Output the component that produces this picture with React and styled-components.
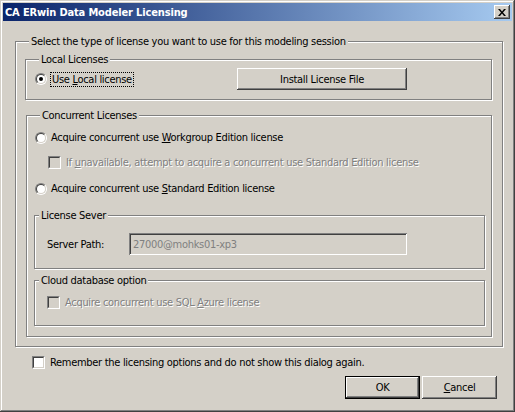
import styled, { createGlobalStyle } from "styled-components";

const FACE = "#d4d0c8";

const GlobalStyle = createGlobalStyle`
  html, body {
    margin: 0;
    padding: 0;
    background: ${FACE};
  }
  * {
    box-sizing: border-box;
  }
`;

const Window = styled.div`
  width: 515px;
  height: 412px;
  padding: 3px;
  background: ${FACE};
  box-shadow: inset -1px -1px #404040, inset 1px 1px ${FACE},
    inset -2px -2px #808080, inset 2px 2px #ffffff;
  font-family: "DejaVu Sans Condensed", "Liberation Sans", sans-serif;
  font-size: 11px;
  line-height: 13px;
  letter-spacing: -0.3px;
  color: #000;
`;

const TitleBar = styled.div`
  height: 18px;
  display: flex;
  align-items: center;
  padding-left: 2px;
  background: linear-gradient(to right, #0a246a, #a6caf0);
  color: #fff;
  font-weight: bold;
  letter-spacing: -0.15px;
`;

const CloseButton = styled.div`
  margin-left: auto;
  margin-right: 2px;
  width: 16px;
  height: 14px;
  display: flex;
  align-items: center;
  justify-content: center;
  background: ${FACE};
  box-shadow: inset -1px -1px #404040, inset 1px 1px #ffffff,
    inset -2px -2px #808080, inset 2px 2px ${FACE};
`;

const Client = styled.div`
  display: flex;
  flex-direction: column;
`;

const GroupBox = styled.div`
  width: ${(p) => p.$width}px;
  margin: ${(p) => p.$margin};
  padding: ${(p) => p.$padding};
  border: 1px solid #808080;
  box-shadow: inset 1px 1px #ffffff, 1px 1px #ffffff;
`;

const Caption = styled.div`
  width: fit-content;
  height: 13px;
  margin: -7px 0 0 ${(p) => p.$indent}px;
  padding: 0 2px;
  background: ${FACE};
  white-space: nowrap;
`;

const LocalRow = styled.div`
  display: grid;
  grid-template-columns: 202px 170px;
  align-items: center;
  height: 22px;
  margin-top: 2px;
`;

const OptionRow = styled.div`
  display: flex;
  align-items: center;
  height: 13px;
  gap: ${(p) => p.$gap}px;
  margin: ${(p) => p.$margin};
  white-space: nowrap;
  color: ${(p) => (p.$disabled ? "#808080" : "#000")};
  text-shadow: ${(p) => (p.$disabled ? "1px 1px 0 #ffffff" : "none")};
`;

const RadioOuter = styled.span`
  width: 12px;
  height: 12px;
  flex: none;
  border-radius: 50%;
  border: 1px solid;
  border-color: #808080 #ffffff #ffffff #808080;
  display: flex;
`;

const RadioInner = styled.span`
  flex: 1;
  border-radius: 50%;
  border: 1px solid;
  border-color: #404040 ${FACE} ${FACE} #404040;
  background: #ffffff;
  display: flex;
  align-items: center;
  justify-content: center;

  &::after {
    content: "";
    width: 4px;
    height: 4px;
    border-radius: 50%;
    background: ${(p) => (p.$checked ? "#000" : "transparent")};
  }
`;

const CheckOuter = styled.span`
  width: 13px;
  height: 13px;
  flex: none;
  border: 1px solid;
  border-color: #808080 #ffffff #ffffff #808080;
  display: flex;
`;

const CheckInner = styled.span`
  flex: 1;
  border: 1px solid;
  border-color: #404040 ${FACE} ${FACE} #404040;
  background: ${(p) => (p.$disabled ? FACE : "#ffffff")};
`;

const FocusLabel = styled.span`
  border: 1px dotted #000;
  padding: 0 1px;
  line-height: 13px;
`;

const Button = styled.button`
  width: ${(p) => p.$width}px;
  height: ${(p) => p.$height}px;
  padding: 0;
  font: inherit;
  letter-spacing: inherit;
  color: #000;
  background: ${FACE};
  border: ${(p) => (p.$default ? "1px solid #000" : "none")};
  box-shadow: inset -1px -1px #404040, inset 1px 1px #ffffff,
    inset -2px -2px #808080, inset 2px 2px ${FACE};
`;

const FieldRow = styled.div`
  display: grid;
  grid-template-columns: 82px 278px;
  align-items: center;
  margin-top: 11px;
`;

const TextField = styled.div`
  height: 22px;
  padding: 0 4px;
  display: flex;
  align-items: center;
  color: #808080;
  background: ${FACE};
  box-shadow: inset 1px 1px #808080, inset -1px -1px #ffffff,
    inset 2px 2px #404040, inset -2px -2px ${FACE};
`;

const ButtonRow = styled.div`
  display: flex;
  justify-content: flex-end;
  gap: 2px;
  margin: 7px 15px 0 0;
`;

const Radio = ({ checked }) => (
  <RadioOuter>
    <RadioInner $checked={checked} />
  </RadioOuter>
);

const Check = ({ disabled }) => (
  <CheckOuter>
    <CheckInner $disabled={disabled} />
  </CheckOuter>
);

export default function App() {
  return (
    <>
      <GlobalStyle />
      <Window>
        <TitleBar>
          CA ERwin Data Modeler Licensing
          <CloseButton>
            <svg width="8" height="7" viewBox="0 0 8 7">
              <path
                d="M0 0h2l2 2.5L6 0h2L5 3.5 8 7H6L4 4.5 2 7H0l3-3.5z"
                fill="#000"
              />
            </svg>
          </CloseButton>
        </TitleBar>
        <Client>
          <GroupBox $width={488} $margin="20px 0 0 12px" $padding="0 0 9px 9px">
            <Caption $indent={4}>
              Select the type of license you want to use for this modeling session
            </Caption>

            <GroupBox $width={467} $margin="11px 0 0 0" $padding="0 0 9px 9px">
              <Caption $indent={4}>Local Licenses</Caption>
              <LocalRow>
                <OptionRow $gap={3}>
                  <Radio checked />
                  <FocusLabel>
                    Use <u>L</u>ocal license
                  </FocusLabel>
                </OptionRow>
                <Button $width={170} $height={22}>
                  Install License File
                </Button>
              </LocalRow>
            </GroupBox>

            <GroupBox $width={466} $margin="15px 0 0 1px" $padding="0 0 10px 7px">
              <Caption $indent={6}>Concurrent Licenses</Caption>
              <OptionRow $gap={4} $margin="9px 0 0 1px">
                <Radio />
                <span>
                  Acquire concurrent use <u>W</u>orkgroup Edition license
                </span>
              </OptionRow>
              <OptionRow $gap={5} $margin="12px 0 0 14px" $disabled>
                <Check disabled />
                <span>
                  If <u>u</u>navailable, attempt to acquire a concurrent use
                  Standard Edition license
                </span>
              </OptionRow>
              <OptionRow $gap={4} $margin="13px 0 0 1px">
                <Radio />
                <span>
                  Acquire concurrent use <u>S</u>tandard Edition license
                </span>
              </OptionRow>

              <GroupBox $width={451} $margin="20px 0 0 0" $padding="0 0 13px 12px">
                <Caption $indent={-8}>License Sever</Caption>
                <FieldRow>
                  <span>Server Path:</span>
                  <TextField>27000@mohks01-xp3</TextField>
                </FieldRow>
              </GroupBox>

              <GroupBox $width={451} $margin="11px 0 0 0" $padding="0 0 16px 12px">
                <Caption $indent={-8}>Cloud database option</Caption>
                <OptionRow $gap={5} $margin="9px 0 0 0" $disabled>
                  <Check disabled />
                  <span>
                    Acquire concurrent use SQL <u>A</u>zure license
                  </span>
                </OptionRow>
              </GroupBox>
            </GroupBox>
          </GroupBox>

          <OptionRow $gap={5} $margin="9px 0 0 29px">
            <Check />
            <span>Remember the licensing options and do not show this dialog again.</span>
          </OptionRow>

          <ButtonRow>
            <Button $width={75} $height={23} $default>
              OK
            </Button>
            <Button $width={75} $height={23}>
              <u>C</u>ancel
            </Button>
          </ButtonRow>
        </Client>
      </Window>
    </>
  );
}
